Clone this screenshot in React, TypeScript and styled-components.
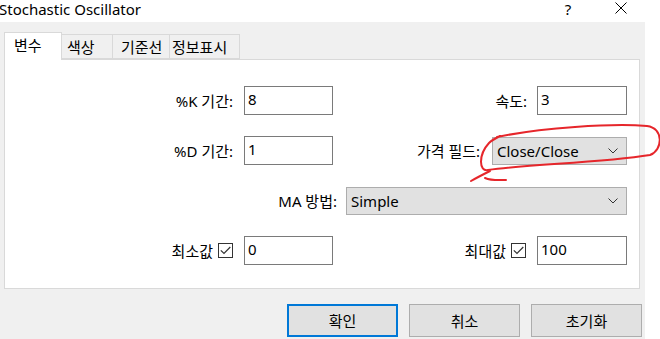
import React from 'react'
import styled, { createGlobalStyle } from 'styled-components'

const GlobalStyle = createGlobalStyle`
  html, body {
    margin: 0;
    padding: 0;
    background: #ffffff;
  }
  body {
    font-family: "Noto Sans", "Noto Sans CJK KR", sans-serif;
    color: #000000;
  }
`

const Screen = styled.div`
  position: relative;
  width: 660px;
  height: 339px;
  overflow: hidden;
  background: #ffffff;
  font-size: 15px;
`

const TitleBar = styled.div`
  height: 22px;
  display: flex;
  align-items: flex-start;
  background: #ffffff;
`

const Title = styled.div`
  margin-left: -1px;
  padding-top: 1px;
  line-height: 16px;
  font-size: 15px;
  flex: 1;
`

const HelpMark = styled.div`
  width: 14px;
  padding-top: 1px;
  line-height: 16px;
  font-size: 15px;
  text-align: center;
`

const CloseMark = styled.div`
  width: 14px;
  margin: 2px 31px 0 40px;
  display: flex;
`

const Dialog = styled.div`
  width: 645px;
  height: 317px;
  background: #f0f0f0;
  padding-top: 10px;
  box-sizing: border-box;
`

const TabStrip = styled.div`
  display: flex;
  align-items: flex-end;
  padding-left: 4px;
  height: 27px;
  position: relative;
  z-index: 1;
`

const Tab = styled.div<{ $active?: boolean; $w: number; $pad: number }>`
  box-sizing: border-box;
  width: ${p => p.$w}px;
  height: ${p => (p.$active ? 28 : 25)}px;
  padding-left: ${p => p.$pad}px;
  padding-top: 3px;
  margin-bottom: ${p => (p.$active ? -1 : 0)}px;
  background: ${p => (p.$active ? '#ffffff' : '#f0f0f0')};
  border: 1px solid #d9d9d9;
  border-bottom: ${p => (p.$active ? 'none' : '1px solid #d9d9d9')};
  margin-left: ${p => (p.$active ? 0 : -1)}px;
  line-height: 18px;
  font-size: 15px;
  white-space: nowrap;
  &:nth-child(2) {
    margin-left: 0;
    border-left: none;
  }
`

const Panel = styled.div`
  margin-left: 4px;
  width: 636px;
  height: 230px;
  box-sizing: border-box;
  background: #ffffff;
  border: 1px solid #d9d9d9;
  padding: 26px 12px 0 0;
  display: flex;
  flex-direction: column;
  gap: 21px;
`

const Row = styled.div`
  height: 29px;
  display: flex;
  align-items: center;
`

const LeftCell = styled.div`
  width: 328px;
  display: flex;
  justify-content: flex-end;
  align-items: center;
`

const RightCell = styled.div`
  flex: 1;
  display: flex;
  justify-content: flex-end;
  align-items: center;
`

const Label = styled.span<{ $gap: number }>`
  margin-right: ${p => p.$gap}px;
  font-size: 15px;
  line-height: 20px;
  white-space: nowrap;
`

const TextBox = styled.div<{ $w: number }>`
  box-sizing: border-box;
  width: ${p => p.$w}px;
  height: 29px;
  border: 1px solid #7a7a7a;
  background: #ffffff;
  padding: 2px 0 0 3px;
  line-height: 20px;
  font-size: 15px;
`

const ComboBox = styled.div<{ $w: number }>`
  box-sizing: border-box;
  width: ${p => p.$w}px;
  height: 28px;
  border: 1px solid #adadad;
  background: #e1e1e1;
  padding: 0 8px 0 4px;
  display: flex;
  align-items: center;
  justify-content: space-between;
  font-size: 15px;
`

const CheckBox = styled.span`
  box-sizing: border-box;
  width: 15px;
  height: 15px;
  border: 1px solid #333333;
  background: #ffffff;
  margin-right: 11px;
  display: flex;
  align-items: center;
  justify-content: center;
`

const ButtonRow = styled.div`
  display: flex;
  justify-content: flex-end;
  gap: 11px;
  padding: 15px 3px 0 0;
`

const Button = styled.div<{ $default?: boolean }>`
  box-sizing: border-box;
  width: 111px;
  height: 33px;
  background: #e1e1e1;
  border: ${p => (p.$default ? '2px solid #0078d7' : '1px solid #adadad')};
  display: flex;
  align-items: center;
  justify-content: center;
  font-size: 15px;
`

const Annotation = styled.svg`
  position: absolute;
  left: 0;
  top: 0;
  pointer-events: none;
`

const Chevron = () => (
  <svg width="10" height="6" viewBox="0 0 10 6">
    <path d="M0.5 0.5 L5 5 L9.5 0.5" fill="none" stroke="#333" strokeWidth="1" />
  </svg>
)

const Check = () => (
  <svg width="11" height="9" viewBox="0 0 11 9">
    <path d="M0.8 4.3 L4 7.5 L10.3 1" fill="none" stroke="#333" strokeWidth="1.2" />
  </svg>
)

export default function App() {
  return (
    <Screen>
      <GlobalStyle />
      <TitleBar>
        <Title>Stochastic Oscillator</Title>
        <HelpMark>?</HelpMark>
        <CloseMark>
          <svg width="12" height="12" viewBox="0 0 12 12">
            <path d="M0.5 0.5 L11.5 11.5 M11.5 0.5 L0.5 11.5" stroke="#000" strokeWidth="1" />
          </svg>
        </CloseMark>
      </TitleBar>
      <Dialog>
        <TabStrip>
          <Tab $active $w={58} $pad={9}>변수</Tab>
          <Tab $w={51} $pad={5}>색상</Tab>
          <Tab $w={58} $pad={8}>기준선</Tab>
          <Tab $w={71} $pad={2}>정보표시</Tab>
        </TabStrip>
        <Panel>
          <Row>
            <LeftCell>
              <Label $gap={11}>%K 기간:</Label>
              <TextBox $w={89}>8</TextBox>
            </LeftCell>
            <RightCell>
              <Label $gap={10}>속도:</Label>
              <TextBox $w={90}>3</TextBox>
            </RightCell>
          </Row>
          <Row>
            <LeftCell>
              <Label $gap={11}>%D 기간:</Label>
              <TextBox $w={89}>1</TextBox>
            </LeftCell>
            <RightCell>
              <Label $gap={12}>가격 필드:</Label>
              <ComboBox $w={135}>
                <span>Close/Close</span>
                <Chevron />
              </ComboBox>
            </RightCell>
          </Row>
          <Row>
            <RightCell>
              <Label $gap={9}>MA 방법:</Label>
              <ComboBox $w={281}>
                <span>Simple</span>
                <Chevron />
              </ComboBox>
            </RightCell>
          </Row>
          <Row>
            <LeftCell>
              <Label $gap={5}>최소값</Label>
              <CheckBox>
                <Check />
              </CheckBox>
              <TextBox $w={89}>0</TextBox>
            </LeftCell>
            <RightCell>
              <Label $gap={5}>최대값</Label>
              <CheckBox>
                <Check />
              </CheckBox>
              <TextBox $w={90}>100</TextBox>
            </RightCell>
          </Row>
        </Panel>
        <ButtonRow>
          <Button $default>확인</Button>
          <Button>취소</Button>
          <Button>초기화</Button>
        </ButtonRow>
      </Dialog>
      <Annotation width="660" height="339" viewBox="0 0 660 339">
        <path
          d="M497 137 C540 128 612 123 647 126 C664 128 663 150 650 155 C600 163 530 164 488 170 C479 172 478 155 489 143 C492 140 496 138 500 136"
          fill="none"
          stroke="#e6262b"
          strokeWidth="2"
          strokeLinecap="round"
        />
        <path
          d="M471 181 C478 177 484 174 490 171 M485 178 C492 181 500 180 506 180"
          fill="none"
          stroke="#e6262b"
          strokeWidth="2"
          strokeLinecap="round"
        />
      </Annotation>
    </Screen>
  )
}
